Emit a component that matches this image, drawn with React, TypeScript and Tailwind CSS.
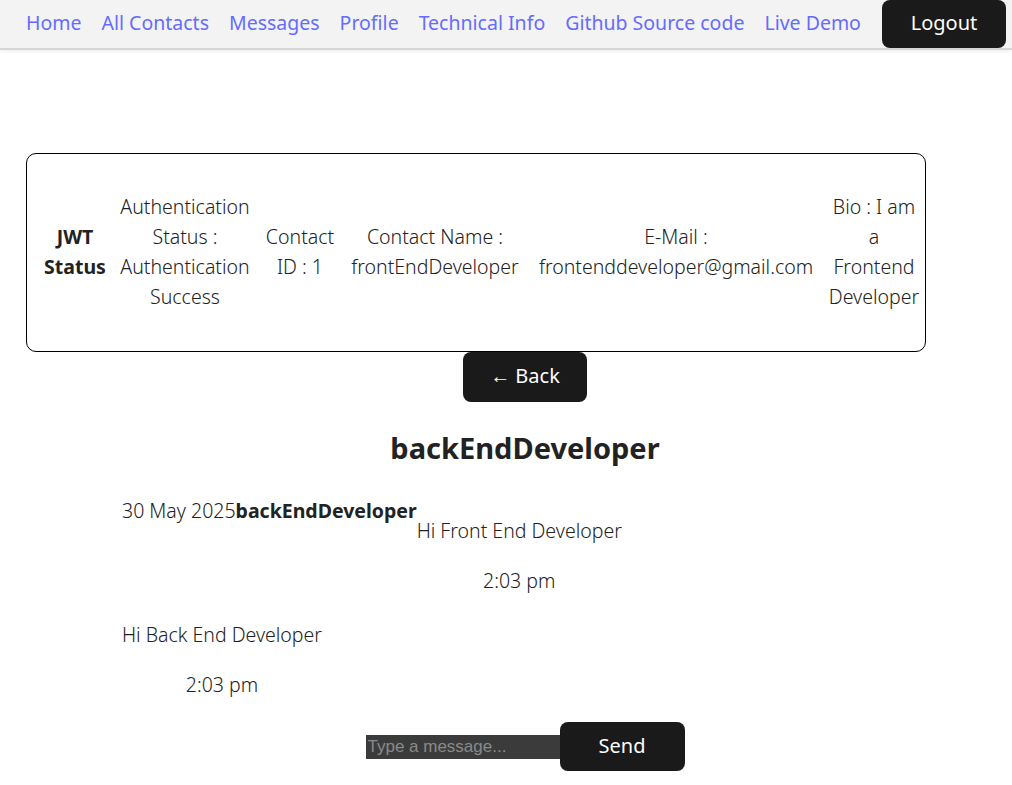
const links = [
  'Home',
  'All Contacts',
  'Messages',
  'Profile',
  'Technical Info',
  'Github Source code',
  'Live Demo',
]

function NavBar() {
  return (
    <nav className="flex h-[50px] items-center gap-[20px] border-b-2 border-[#d6d6d6] bg-[#f3f3f3] pl-[26px] shadow-[0_2px_3px_rgba(0,0,0,0.06)]">
      {links.map((label) => (
        <a key={label} href="#" className="mb-[2px] text-[19.5px] leading-[30px] text-[#646cff] whitespace-nowrap">
          {label}
        </a>
      ))}
      <button className="ml-auto mr-[6px] mb-[1px] h-[48px] w-[124px] shrink-0 self-start rounded-[8px] bg-[#1a1a1a] pb-[2px] text-[20px] text-white">
        Logout
      </button>
    </nav>
  )
}

interface CellProps {
  width: string
  lines: string[]
  bold?: boolean
}

function Cell({ width, lines, bold }: CellProps) {
  return (
    <div className={`${width} shrink-0 text-center ${bold ? 'font-bold' : 'font-light'}`}>
      {lines.map((line) => (
        <div key={line} className="whitespace-nowrap">{line}</div>
      ))}
    </div>
  )
}

function StatusCard() {
  return (
    <div className="ml-[26px] flex h-[199px] w-[900px] items-center rounded-[10px] border border-black pb-[2px] pl-[12px]">
      <div className="flex items-center text-[19.5px] leading-[30px]">
        <Cell width="w-[72px]" bold lines={['JWT', 'Status']} />
        <Cell width="w-[148px]" lines={['Authentication', 'Status :', 'Authentication', 'Success']} />
        <Cell width="w-[82px]" lines={['Contact', 'ID : 1']} />
        <Cell width="w-[188px]" lines={['Contact Name :', 'frontEndDeveloper']} />
        <Cell width="w-[294px]" lines={['E-Mail :', 'frontenddeveloper@gmail.com']} />
        <Cell width="w-[102px]" lines={['Bio : I am', 'a', 'Frontend', 'Developer']} />
      </div>
    </div>
  )
}

export default function App() {
  return (
    <div className="min-h-[785px] bg-white text-[#222] [font-family:'Noto_Sans',sans-serif]">
      <NavBar />
      <div className="pt-[103px]">
        <StatusCard />
        <div className="flex flex-col items-center pl-[38px]">
          <button className="h-[50px] w-[124px] rounded-[8px] bg-[#1a1a1a] pb-[2px] text-[20px] text-white">
            ← Back
          </button>
          <h2 className="mt-[26px] text-[29px] font-bold leading-[40px]">backEndDeveloper</h2>
        </div>

        <div className="ml-[122px] mt-[28px] text-[19.5px] font-light leading-[30px]">
          <div className="flex items-start">
            <span className="whitespace-nowrap">
              30 May 2025<b className="font-bold">backEndDeveloper</b>
            </span>
            <div className="mt-[20px] flex flex-col items-center">
              <p>Hi Front End Developer</p>
              <p className="mt-[20px]">2:03 pm</p>
            </div>
          </div>
          <div className="mt-[24px] inline-flex flex-col items-center">
            <p>Hi Back End Developer</p>
            <p className="mt-[20px]">2:03 pm</p>
          </div>
        </div>

        <div className="mt-[22px] flex items-center justify-center pl-[38px]">
          <input
            placeholder="Type a message..."
            className="h-[24px] w-[194px] bg-[#3b3b3b] px-[2px] text-[17px] text-white placeholder:text-[#8a8a8a] outline-none [font-family:'Liberation_Sans',Arial,sans-serif]"
          />
          <button className="h-[49px] w-[125px] rounded-[8px] bg-[#1a1a1a] pb-[2px] text-[20px] text-white">
            Send
          </button>
        </div>
      </div>
    </div>
  )
}
